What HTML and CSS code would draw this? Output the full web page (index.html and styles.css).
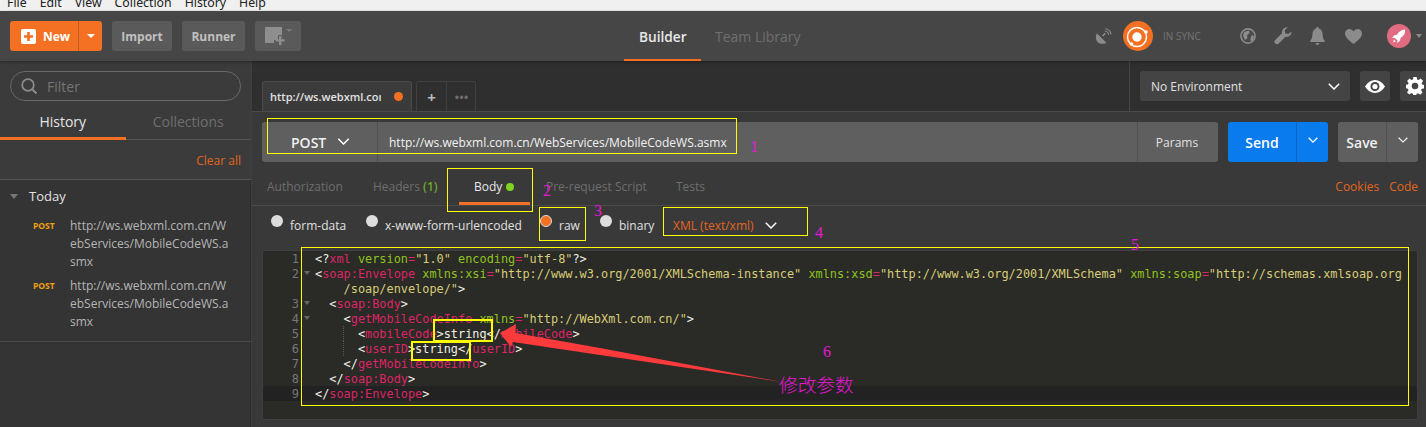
FILE: index.html
```html
<!DOCTYPE html>
<html lang="en">
<head>
<meta charset="utf-8">
<title>Postman</title>
<link rel="stylesheet" href="styles.css">
</head>
<body>
<div class="page">
  <nav class="menubar"><span>File</span><span>Edit</span><span>View</span><span>Collection</span><span>History</span><span>Help</span></nav>

  <header class="header">
    <div class="header-left">
      <div class="btn-new">
        <span class="new-main">
          <svg class="new-plus" viewBox="0 0 15 15"><rect width="15" height="15" rx="2" fill="#fff"/><path d="M6.2 3h2.6v3.2H12v2.6H8.8V12H6.2V8.8H3V6.2h3.2z" fill="#f47023"/></svg>
          New
        </span>
        <span class="new-caret"><i class="caret caret-white"></i></span>
      </div>
      <div class="btn-dark btn-import">Import</div>
      <div class="btn-dark btn-runner">Runner</div>
      <div class="btn-dark btn-window">
        <svg class="window-icon" viewBox="0 0 27 18"><path d="M0 0h17v8h-4v5H9v3H0z" fill="#8e8e8e"/><path d="M14 9h2.400v3.300h3.300v2.200h-3.300V18H14v-3.500h-3.400v-2.200H14z" fill="#8e8e8e"/><path d="M21 2h6l-3 3z" fill="#7a7a7a"/></svg>
      </div>
    </div>
    <div class="header-center">
      <span class="hc-tab hc-active">Builder</span>
      <span class="hc-tab">Team Library</span>
    </div>
    <div class="header-right">
      <svg class="hi hi-sat" viewBox="0 0 18 18"><path d="M2 5.500 12 15.500C8.500 17.500 4.500 17 2.500 14.500.5 12 .3 8.500 2 5.500z" fill="#8b8b8b"/><path d="M8 8.500l3-3" stroke="#8b8b8b" stroke-width="1.600"/><path d="M10.500 3.200a4.500 4.500 0 0 1 4 4M11 .8a7 7 0 0 1 6 6" stroke="#8b8b8b" stroke-width="1.200" fill="none"/></svg>
      <svg class="hi-sync" viewBox="0 0 30 30"><circle cx="15" cy="15" r="15" fill="#f47023"/><circle cx="14" cy="16" r="9.500" stroke="#fff" stroke-width="1.500" fill="none"/><circle cx="14" cy="16" r="4.700" fill="#fff"/><circle cx="23" cy="11" r="1.800" fill="#fff"/><circle cx="8.500" cy="23" r="1.800" fill="#fff"/></svg>
      <span class="sync-label">IN SYNC</span>
      <svg class="hi hi-globe" viewBox="0 0 16 16"><circle cx="8" cy="8" r="7.100" stroke="#8b8b8b" stroke-width="1.600" fill="#4a4a4a"/><path d="M4 4 9 2.500 9.500 5 7 7.500 7.500 10 5 12 3 8zM12 7l2 1-1 4-2.500 1.500L10.500 10z" fill="#8b8b8b"/></svg>
      <svg class="hi hi-wrench" viewBox="0 0 18 18"><path d="M17.600 4.500C17.900 7.500 15 10.500 11.500 9.800L4.800 16.500C3.800 17.700 2 17.500 1 16.500 0 15.300.2 13.800 1.200 12.900L8 6.300C7.300 3 10.200-.300 13.700.300L10.700 3.300 11.300 6.400 14.300 7.100z" fill="#8b8b8b"/></svg>
      <svg class="hi hi-bell" viewBox="0 0 15 18"><path d="M7.500 0c1 0 1.400.7 1.400 1.600C11.300 2.300 12.400 4.500 12.500 7c.1 3 .8 5.200 2.200 6.800.3.500 0 1.200-.6 1.200H.9c-.6 0-.9-.7-.6-1.200C1.700 12.200 2.400 10 2.500 7c.1-2.500 1.200-4.700 3.600-5.400C6.100.7 6.500 0 7.500 0zM5.700 16h3.600c0 1-.8 2-1.800 2s-1.800-1-1.800-2z" fill="#8b8b8b"/></svg>
      <svg class="hi hi-heart" viewBox="0 0 17 15"><path d="M8.500 15C5 12.200 0 8.700 0 4.500 0 1.900 2 0 4.300 0 6 0 7.700 1 8.500 2.500 9.300 1 11 0 12.700 0 15 0 17 1.900 17 4.500 17 8.700 12 12.200 8.500 15z" fill="#8b8b8b"/></svg>
      <svg class="hi-user" viewBox="0 0 24 24"><circle cx="12" cy="12" r="12" fill="#e16c81"/><path d="M18 5.500c-3.500.2-6 1.800-8 5.200l-2.700.5L5 14l2.700-.3 2.800 2.800L10.200 19l2.800-2.300.5-2.700c3.400-2 5-4.800 4.500-8.500z" fill="#fff"/><path d="M7 15.500l1.800 1.700L6 18.500z" fill="#fff"/></svg>
      <i class="caret caret-gray"></i>
    </div>
  </header>

  <div class="workspace">
    <aside class="sidebar">
      <div class="filter-wrap">
        <div class="filter">
          <svg class="filter-icon" viewBox="0 0 17 17"><circle cx="7" cy="7" r="5.800" stroke="#8a8a8a" stroke-width="1.800" fill="none"/><path d="M11 11l4.500 4.500" stroke="#8a8a8a" stroke-width="2.200"/></svg>
          <span>Filter</span>
        </div>
      </div>
      <div class="side-tabs">
        <div class="side-tab side-active">History</div>
        <div class="side-tab">Collections</div>
      </div>
      <div class="clear-row"><span>Clear all</span></div>
      <section class="group">
        <div class="group-title"><i class="caret caret-group"></i>Today</div>
        <div class="hist-item">
          <span class="hist-method">POST</span>
          <span class="hist-url">http://ws.webxml.com.cn/W<br>ebServices/MobileCodeWS.a<br>smx</span>
        </div>
        <div class="hist-item">
          <span class="hist-method">POST</span>
          <span class="hist-url">http://ws.webxml.com.cn/W<br>ebServices/MobileCodeWS.a<br>smx</span>
        </div>
      </section>
    </aside>

    <main class="main">
      <div class="tabstrip">
        <div class="req-tabs">
          <div class="req-tab"><span class="req-tab-text">http://ws.webxml.com.cn</span><i class="dot dot-orange"></i></div>
          <div class="tab-tools">
            <span class="tool-plus">+</span>
            <span class="tool-more">•••</span>
          </div>
        </div>
        <div class="env">
          <div class="env-select"><span>No Environment</span><svg class="chev chev-env" viewBox="0 0 12 7"><path d="M.8.8 6 6l5.200-5.200" stroke="#fff" stroke-width="1.500" fill="none"/></svg></div>
          <div class="env-btn">
            <svg class="eye" viewBox="0 0 20 13"><path d="M0 6.500C2.500 2.300 6 0 10 0s7.500 2.300 10 6.500C17.500 10.700 14 13 10 13S2.500 10.700 0 6.500z" fill="#fff"/><circle cx="10" cy="6.500" r="4.500" fill="#444"/><circle cx="10" cy="6.500" r="2.600" fill="#fff"/></svg>
          </div>
          <div class="env-btn env-gear">
            <svg class="gear" viewBox="0 0 18 18"><path d="M7.300 0h3.400l.4 2.500 1.500.6L14.700 1.600l2.400 2.400-1.500 2 .6 1.600L18 8v3.400l-2.300.4-.6 1.500 1.500 2.100-2.400 2.300-2.100-1.500-1.500.6-.4 2.200H7.300l-.4-2.300-1.500-.6-2 1.500L1 15.300l1.500-2-.6-1.600L0 11.300V7.800l2-.3.600-1.600L1.100 3.900l2.400-2.400 2 1.500 1.500-.6z" fill="#fff"/><circle cx="9" cy="9" r="3.300" fill="#444"/></svg>
          </div>
        </div>
      </div>

      <div class="urlrow">
        <div class="urlbar">
          <div class="method"><span>POST</span><svg class="chev chev-method" viewBox="0 0 12 7"><path d="M.8.8 6 6l5.200-5.200" stroke="#fff" stroke-width="1.500" fill="none"/></svg></div>
          <div class="url">http://ws.webxml.com.cn/WebServices/MobileCodeWS.asmx</div>
          <div class="params">Params</div>
        </div>
        <div class="send">
          <span class="send-main">Send</span>
          <span class="send-caret"><svg class="chev chev-small" viewBox="0 0 12 7"><path d="M.8.8 6 6l5.200-5.200" stroke="#fff" stroke-width="1.500" fill="none"/></svg></span>
        </div>
        <div class="save">
          <span class="save-main">Save</span>
          <span class="save-caret"><svg class="chev chev-small" viewBox="0 0 12 7"><path d="M.8.8 6 6l5.200-5.200" stroke="#fff" stroke-width="1.300" fill="none"/></svg></span>
        </div>
      </div>

      <div class="req-nav">
        <div class="req-nav-left">
          <span class="rn rn-auth">Authorization</span>
          <span class="rn rn-headers">Headers <em>(1)</em></span>
          <span class="rn rn-body">Body<i class="dot dot-green"></i></span>
          <span class="rn rn-pre">Pre-request Script</span>
          <span class="rn rn-tests">Tests</span>
        </div>
        <div class="req-nav-right"><span>Cookies</span><span>Code</span></div>
      </div>

      <div class="body-types">
        <label class="bt bt-form"><i class="radio"></i>form-data</label>
        <label class="bt bt-url"><i class="radio"></i>x-www-form-urlencoded</label>
        <label class="bt bt-raw"><i class="radio radio-on"></i>raw</label>
        <label class="bt bt-bin"><i class="radio"></i>binary</label>
        <span class="bt-xml">XML (text/xml)<svg class="chev chev-xml" viewBox="0 0 12 7"><path d="M.8.8 6 6l5.200-5.200" stroke="#fff" stroke-width="1.500" fill="none"/></svg></span>
      </div>

      <div class="editor">
        <div class="gutter">
          <span>1</span><span class="fold">2</span><span>&nbsp;</span><span class="fold">3</span><span class="fold">4</span><span>5</span><span>6</span><span>7</span><span>8</span><span class="ln-active">9</span>
        </div>
        <div class="code">
<div class="cl"><b>&lt;?</b><u>xml</u> <s>version</s><u>=</u><q>"1.0"</q> <s>encoding</s><u>=</u><q>"utf-8"</q><b>?&gt;</b></div>
<div class="cl"><b>&lt;</b><u>soap:Envelope</u> <s>xmlns:xsi</s><u>=</u><q>"http://www.w3.org/2001/XMLSchema-instance"</q> <s>xmlns:xsd</s><u>=</u><q>"http://www.w3.org/2001/XMLSchema"</q> <s>xmlns:soap</s><u>=</u><q>"http://schemas.xmlsoap.org</q></div>
<div class="cl">    <q>/soap/envelope/"</q><b>&gt;</b></div>
<div class="cl">  <b>&lt;</b><u>soap:Body</u><b>&gt;</b></div>
<div class="cl">    <b>&lt;</b><u>getMobileCodeInfo</u> <s>xmlns</s><u>=</u><q>"http://WebXml.com.cn/"</q><b>&gt;</b></div>
<div class="cl cl-guide">      <b>&lt;</b><u>mobileCode</u><b>&gt;string&lt;/</b><u>mobileCode</u><b>&gt;</b></div>
<div class="cl cl-guide">      <b>&lt;</b><u>userID</u><b>&gt;string&lt;/</b><u>userID</u><b>&gt;</b></div>
<div class="cl">    <b>&lt;/</b><u>getMobileCodeInfo</u><b>&gt;</b></div>
<div class="cl">  <b>&lt;/</b><u>soap:Body</u><b>&gt;</b></div>
<div class="cl cl-active"><b>&lt;/</b><u>soap:Envelope</u><b>&gt;</b></div>
        </div>
      </div>
    </main>
  </div>

  <div class="annotations">
    <div class="box box-1"></div>
    <div class="box box-2"></div>
    <div class="box box-3"></div>
    <div class="box box-4"></div>
    <div class="box box-5"></div>
    <div class="box box-6"></div>
    <div class="box box-7"></div>
    <svg class="arrow" viewBox="0 0 1426 427"><path d="M500 333 516 324 515.500 333 600 348 782 382 600 355 513 342 511 347z" fill="#fb3a3c"/></svg>
    <span class="note n1">1</span>
    <span class="note n2">2</span>
    <span class="note n3">3</span>
    <span class="note n4">4</span>
    <span class="note n5">5</span>
    <span class="note n6">6</span>
    <span class="note n7">修改参数</span>
  </div>
</div>
</body>
</html>
```

FILE: styles.css
```css
* { box-sizing: border-box; }
html, body { margin: 0; padding: 0; }
body { width: 1426px; height: 427px; overflow: hidden; background: #373737; font-family: "Open Sans", "Noto Sans", sans-serif; }
.page { position: relative; width: 1426px; height: 427px; overflow: hidden; }
i, em { font-style: normal; }

.menubar { height: 11px; background: #f0f0f0; display: flex; gap: 13px; padding-left: 7px; font: 12.300px/6px "Noto Sans", "Liberation Sans", sans-serif; color: #222; overflow: hidden; }

.header { height: 50px; background: #464646; display: flex; align-items: center; position: relative; box-shadow: 0 1px 3px rgba(0,0,0,.35); z-index: 2; }
.header-left { display: flex; gap: 10px; padding-left: 10px; width: 500px; }
.btn-new { display: flex; width: 92px; height: 30px; background: #f47023; border-radius: 3px; color: #fff; font-size: 12px; font-weight: 700; }
.new-main { width: 69px; display: flex; align-items: center; gap: 7px; padding-left: 11px; border-right: 1px solid #c75c1d; }
.new-plus { width: 15px; height: 15px; }
.new-caret { flex: 1; display: flex; align-items: center; justify-content: center; }
.caret { display: inline-block; width: 0; height: 0; border-style: solid; border-color: transparent; border-width: 4px 4px 0; }
.caret-white { border-top-color: #fff; border-width: 4px 4.500px 0; }
.caret-gray { border-top-color: #8b8b8b; border-width: 4px 3.500px 0; margin-left: 5px; }
.btn-dark { height: 30px; background: #5a5a5a; border-radius: 3px; color: #c0c0c0; font-size: 12px; font-weight: 700; display: flex; align-items: center; justify-content: center; }
.btn-import { width: 60px; }
.btn-runner { width: 63px; }
.btn-window { width: 46px; }
.window-icon { width: 27px; height: 18px; margin-left: 1px; }

.header-center { display: flex; height: 50px; width: 400px; padding-left: 124px; }
.hc-tab { height: 50px; line-height: 51px; font-size: 14px; font-weight: 400; color: #6f6f6f; padding: 0 15px; margin-right: -1px; white-space: nowrap; }
.hc-active { color: #e8e8e8; font-size: 13.700px; font-weight: 600; border-bottom: 2px solid #f47023; width: 77px; }

.header-right { flex: 1; display: flex; align-items: center; padding-left: 195px; }
.hi { display: block; fill: #8b8b8b; }
.hi-sat { width: 17px; height: 17px; }
.hi-sync { width: 30px; height: 30px; margin-left: 11px; }
.sync-label { font-size: 10px; font-weight: 400; color: #757575; margin-left: 10px; width: 77px; white-space: nowrap; }
.hi-globe { width: 16px; height: 16px; }
.hi-wrench { width: 18px; height: 18px; margin-left: 18px; }
.hi-bell { width: 15px; height: 18px; margin-left: 18px; }
.hi-heart { width: 17px; height: 15px; margin-left: 20px; }
.hi-user { width: 24px; height: 24px; margin-left: 25px; }

.workspace { display: flex; height: 366px; }
.sidebar { width: 252px; flex: none; background: #343434; border-right: 1px solid #3f3f3f; box-shadow: inset -1px 0 0 #2b2b2b; }
.filter-wrap { padding: 10px 10px 0; background: #3b3b3b; }
.filter { width: 231px; height: 30px; border: 1px solid #696969; border-radius: 15px; display: flex; align-items: center; padding-left: 10px; gap: 9px; color: #757575; font-size: 14px; }
.filter-icon { width: 17px; height: 17px; }
.side-tabs { height: 39px; display: flex; background: #3b3b3b; border-bottom: 1px solid #555; }
.side-tab { width: 126px; height: 39px; line-height: 41px; text-align: center; font-size: 14px; color: #6f6f6f; }
.side-active { color: #e6e6e6; border-bottom: 3px solid #f47023; }
.clear-row { height: 40px; padding: 11px 10px 0; text-align: right; background: #3b3b3b; border-bottom: 1px solid #555; font-size: 12px; color: #e0661f; line-height: 20px; }
.group { border-bottom: 1px solid #4a4a4a; height: 162px; padding-top: 6px; }
.group-title { display: flex; align-items: center; height: 20px; font-size: 13px; color: #e2e2e2; padding-left: 10px; }
.caret-group { border-top-color: #777; border-width: 5px 4px 0; margin-right: 11px; width: 0; }
.hist-item { display: flex; margin-top: 11px; height: 50px; }
.hist-item + .hist-item { margin-top: 10px; }
.hist-method { width: 70px; padding: 1px 0 0 33px; font-size: 8.500px; font-weight: 700; color: #f0a012; line-height: 16px; }
.hist-url { font-size: 12px; color: #b5b5b5; line-height: 18px; white-space: nowrap; }

.main { flex: 1; background: #393939; min-width: 0; overflow: hidden; }
.tabstrip { height: 51px; display: flex; background: #2f2f2f; border-bottom: 1px solid #4a4a4a; }
.req-tabs { width: 877px; flex: none; display: flex; padding: 20px 0 0 10px; gap: 4px; }
.req-tab { width: 150px; height: 30px; background: #3b3b3b; border: 1px solid #4a4a4a; border-bottom: 0; border-radius: 3px 3px 0 0; display: flex; align-items: center; padding-left: 7px; }
.req-tab-text { width: 111px; overflow: hidden; white-space: nowrap; font-size: 11px; font-weight: 600; color: #e2e2e2; }
.dot { display: inline-block; border-radius: 50%; }
.dot-orange { width: 9px; height: 9px; background: #f47023; margin-left: 13px; }
.tab-tools { display: flex; height: 30px; border: 1px solid #404040; border-bottom: 0; border-radius: 3px 3px 0 0; color: #9a9a9a; }
.tool-plus { width: 30px; display: flex; align-items: center; justify-content: center; font-size: 15px; font-weight: 700; color: #bcbcbc; border-right: 1px solid #404040; }
.tool-more { width: 28px; display: flex; align-items: center; justify-content: center; font-size: 15px; color: #6f6f6f; letter-spacing: -1px; }
.env { flex: none; width: 300px; display: flex; gap: 10px; padding: 10px 0 0 10px; border-left: 1px solid #464646; }
.env-select { width: 210px; flex: none; height: 30px; background: #444; border-radius: 3px; color: #e0e0e0; font-size: 12px; display: flex; align-items: center; justify-content: space-between; padding: 0 10px 0 11px; }
.env-btn { width: 30px; height: 30px; background: #444; border-radius: 3px; display: flex; align-items: center; justify-content: center; flex: none; }
.eye { width: 20px; height: 13px; }
.gear { width: 18px; height: 18px; flex: none; }
.chev { display: block; }
.chev-env { width: 12px; height: 7px; }

.urlrow { display: flex; padding: 10px 8px 0 10px; height: 50px; gap: 10px; }
.urlbar { width: 956px; flex: none; height: 40px; background: #5f5f5f; border-radius: 3px; display: flex; }
.method { width: 116px; display: flex; align-items: center; padding: 1px 0 0 29px; gap: 11px; color: #f0f0f0; font-size: 14px; font-weight: 600; border-right: 1px solid #4f4f4f; }
.chev-method { width: 13px; height: 7px; margin-top: -2px; }
.url { flex: 1; line-height: 41px; font-size: 12px; font-weight: 500; color: #f2f2f2; padding-left: 11px; }
.params { width: 81px; border-left: 1px solid #4f4f4f; line-height: 42px; text-align: center; font-size: 12px; color: #e0e0e0; padding-right: 2px; }
.send { width: 100px; flex: none; height: 40px; background: #097bed; border-radius: 3px; display: flex; color: #fff; font-size: 14px; font-weight: 600; }
.send-main { width: 69px; line-height: 42px; text-align: center; border-right: 1px solid #0a66c2; }
.send-caret, .save-caret { flex: 1; display: flex; align-items: center; justify-content: center; }
.chev-small { width: 10px; height: 6px; margin-top: -4px; }
.save { width: 80px; flex: none; height: 40px; background: #5f5f5f; border-radius: 3px; display: flex; color: #f0f0f0; font-size: 14px; font-weight: 600; }
.save-main { width: 49px; line-height: 42px; text-align: center; border-right: 1px solid #505050; }

.req-nav { height: 44px; display: flex; justify-content: space-between; border-bottom: 1px solid #4a4a4a; padding: 0 8px 0 15px; }
.req-nav-left { display: flex; height: 43px; }
.rn { font-size: 12px; color: #6e6e6e; line-height: 50px; white-space: nowrap; }
.rn em { color: #6ea82a; font-weight: 600; }
.rn-auth { width: 106px; }
.rn-headers { width: 86px; }
.rn-body { width: 71px; padding-left: 15px; color: #e8e8e8; border-bottom: 3px solid #f47023; height: 43px; }
.rn-pre { width: 130px; margin-left: 16px; }
.dot-green { width: 8px; height: 8px; background: #7ed321; margin-left: 4px; }
.rn-tests { width: 50px; }
.req-nav-right { display: flex; gap: 10px; font-size: 12px; color: #e0661f; line-height: 50px; }

.body-types { height: 34px; display: flex; align-items: center; padding: 4px 0 0 19px; font-size: 12px; color: #e0e0e0; }
.bt { display: flex; align-items: center; white-space: nowrap; }
.radio { width: 12px; height: 12px; border-radius: 50%; background: #ddd; margin-right: 7px; display: block; position: relative; top: -4px; }
.radio-on { background: #f47023; border: 1.500px solid #ddd; }
.bt-form { width: 95px; }
.bt-url { width: 174px; }
.bt-raw { width: 60px; }
.bt-bin { width: 73px; }
.bt-xml { display: flex; align-items: center; color: #e0661f; white-space: nowrap; }
.chev-xml { width: 12px; height: 7px; margin-left: 11px; }

.editor { margin: 10px 8px 0 10px; width: 1156px; height: 170px; border: 1px solid #3f3f3f; border-radius: 3px; background: #2a2a26; display: flex; }
.gutter { width: 52px; padding-right: 16px; flex: none; text-align: right; font: 12px/17px "DejaVu Sans Mono", monospace; color: #777; }
.gutter span { display: block; height: 15px; position: relative; }
.fold::after { content: ""; position: absolute; left: 41px; top: 5px; border-style: solid; border-color: #666 transparent transparent; border-width: 4px 3px 0; }
.ln-active { background: #222; margin-right: -16px; padding-right: 16px; }
.code { flex: 1; min-width: 0; display: flex; flex-direction: column; font: 11.880px/17px "DejaVu Sans Mono", monospace; white-space: pre; }
.cl { height: 15px; flex: none; }
.cl-guide { background: repeating-linear-gradient(#5a5a55 0 1px, transparent 1px 2px) 28px 0 / 1px 100% no-repeat; }
.cl-active { background: #222; }
.code b { font-weight: 400; color: #f0f0e8; }
.code u { text-decoration: none; color: #dc2566; }
.code s { text-decoration: none; color: #8fc31f; }
.code q { quotes: none; color: #d8cd78; }

.annotations { position: absolute; left: 0; top: 0; width: 1426px; height: 427px; z-index: 5; pointer-events: none; }
.box { position: absolute; border: 1px solid #ffff00; }
.box-1 { left: 267px; top: 118px; width: 470px; height: 36px; }
.box-2 { left: 447px; top: 168px; width: 86px; height: 44px; }
.box-3 { left: 539px; top: 207px; width: 47px; height: 34px; }
.box-4 { left: 663px; top: 207px; width: 145px; height: 29px; }
.box-5 { left: 301px; top: 247px; width: 1108px; height: 159px; }
.box-6 { left: 433px; top: 319px; width: 60px; height: 23px; border-width: 2px; }
.box-7 { left: 411px; top: 341px; width: 60px; height: 20px; border-width: 2px; }
.arrow { position: absolute; left: 0; top: 0; width: 1426px; height: 427px; }
.note { position: absolute; color: #e815d8; font: 16px/18px "Liberation Serif", "Noto Sans CJK SC", serif; }
.n1 { left: 750px; top: 138px; }
.n2 { left: 543px; top: 182px; }
.n3 { left: 594px; top: 202px; }
.n4 { left: 815px; top: 224px; }
.n5 { left: 1131px; top: 236px; }
.n6 { left: 823px; top: 343px; }
.n7 { left: 779px; top: 374px; font: 300 18.700px/20px "Noto Sans CJK SC", sans-serif; white-space: nowrap; }
```
